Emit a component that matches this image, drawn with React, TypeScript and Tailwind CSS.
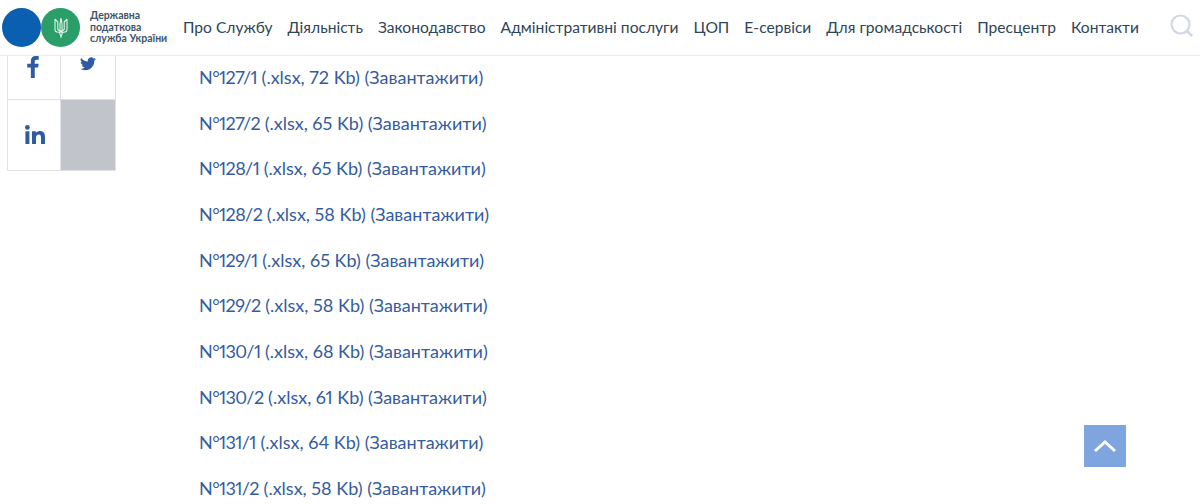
const nav = ["Про Службу", "Діяльність", "Законодавство", "Адміністративні послуги", "ЦОП", "Е-сервіси", "Для громадськості", "Пресцентр", "Контакти"];
const rows = [
  ["N°127/1", "(.xlsx, 72 Kb) (Завантажити)"],
  ["N°127/2", "(.xlsx, 65 Kb) (Завантажити)"],
  ["N°128/1", "(.xlsx, 65 Kb) (Завантажити)"],
  ["N°128/2", "(.xlsx, 58 Kb) (Завантажити)"],
  ["N°129/1", "(.xlsx, 65 Kb) (Завантажити)"],
  ["N°129/2", "(.xlsx, 58 Kb) (Завантажити)"],
  ["N°130/1", "(.xlsx, 68 Kb) (Завантажити)"],
  ["N°130/2", "(.xlsx, 61 Kb) (Завантажити)"],
  ["N°131/1", "(.xlsx, 64 Kb) (Завантажити)"],
  ["N°131/2", "(.xlsx, 58 Kb) (Завантажити)"],
];

export default function App() {
  return (
    <div className="relative h-[504px] w-[1200px] overflow-hidden bg-white font-['Lato',sans-serif]">
      <header className="flex h-[56px] items-center border-b border-[#ececec] pl-[2px]">
        <div className="h-[39px] w-[39px] shrink-0 rounded-full bg-[#0a5fb0]" />
        <div className="flex h-[39px] w-[39px] shrink-0 items-center justify-center rounded-full bg-[#2a9d68]">
          <svg width="14" height="21" viewBox="0 0 14 21" fill="none" stroke="#e3f3ea" strokeWidth="1.1">
            <path d="M7 1l-1 6v7h2V7zM1 2v10.500c0 1.800 1.600 2.700 3.500 2.700H7M13 2v10.500c0 1.800-1.600 2.700-3.500 2.700H7M1 2l2.800 3v7.500L7 15l3.200-2.500V5L13 2M5.500 15.500L7 20l1.500-4.500" />
          </svg>
        </div>
        <div className="ml-[10px] w-[84px] shrink-0 text-[10.5px] leading-[11.5px] font-bold text-[#3f5468]">
          <div>Державна</div>
          <div>податкова</div>
          <div className="whitespace-nowrap">служба України</div>
        </div>
        <nav className="ml-[9px] flex shrink-0 gap-[15px] whitespace-nowrap text-[15.6px] text-[#2f4558]">
          {nav.map((n) => (
            <span key={n}>{n}</span>
          ))}
        </nav>
        <svg className="ml-[31px] mb-[3px] shrink-0" width="24" height="24" viewBox="0 0 24 24" fill="none" stroke="#d0d8e4" strokeWidth="2.2">
          <circle cx="10.500" cy="10.500" r="9" />
          <path d="M17 17l5 5" strokeWidth="2.800" />
        </svg>
      </header>

      <div className="flex">
        <div className="ml-[7px] grid h-[115px] w-[109px] shrink-0 grid-cols-[53px_54px] grid-rows-[44px_70px] border-x border-b border-[#dfe1e5]">
          <div className="flex items-start justify-center border-r border-b border-[#dfe1e5]">
            <svg width="13" height="22" viewBox="0 0 12 21" fill="#2f5ba3" className="mr-[1px]">
              <path d="M3.500 21V11H0V7.300h3.500V4.600C3.500 1.600 5.300 0 8 0c1.300 0 2.500.1 3 .2v3.300H9c-1.500 0-1.800.7-1.800 1.700v2.100h3.700L10.400 11H7.200v10z" />
            </svg>
          </div>
          <div className="flex items-start justify-center border-b border-[#dfe1e5]">
            <svg width="16" height="14" viewBox="0 0 24 20" fill="#2f5ba3" className="mt-[1px]">
              <path d="M24 2.400a9.800 9.800 0 0 1-2.800.8A4.900 4.900 0 0 0 23.300.5a9.800 9.800 0 0 1-3.100 1.200 4.900 4.900 0 0 0-8.400 4.500A14 14 0 0 1 1.700.9a4.900 4.900 0 0 0 1.500 6.600 4.900 4.900 0 0 1-2.200-.6v.1a4.900 4.900 0 0 0 3.900 4.800 4.900 4.900 0 0 1-2.200.1 4.900 4.900 0 0 0 4.600 3.400A9.900 9.900 0 0 1 0 17.300 14 14 0 0 0 7.500 19.500c9.100 0 14-7.500 14-14v-.6A10 10 0 0 0 24 2.400z" />
            </svg>
          </div>
          <div className="flex items-center justify-center border-r border-[#dfe1e5]">
            <svg width="20" height="19" viewBox="0 0 20 19" fill="#2f5ba3" className="mb-[2px] ml-[2px]">
              <circle cx="2.400" cy="2.400" r="2.400" />
              <rect x="0.400" y="6.300" width="4" height="12.700" />
              <path d="M7 6.300h3.800V8c.6-1 2-2 4-2 4 0 5.200 2.500 5.200 6v7h-4v-6.300c0-1.700-.4-3.200-2.200-3.200-1.900 0-2.800 1.300-2.800 3.200V19H7z" />
            </svg>
          </div>
          <div className="bg-[#c1c4cb]" />
        </div>

        <ul className="ml-[83px] flex flex-col pt-[7px] text-[18px] leading-[28px] text-[#345c9f]">
          {rows.map(([a, b]) => (
            <li key={a} className="mb-[17.67px] whitespace-nowrap">
              <span className="tracking-[-0.6px] proportional-nums">{a}</span> <span className="proportional-nums">{b}</span>
            </li>
          ))}
        </ul>
      </div>

      <div className="absolute left-[1084px] top-[425px] flex h-[42px] w-[42px] items-center justify-center bg-[#7fa5df]">
        <svg width="24" height="14" viewBox="0 0 24 14" fill="none" stroke="#fff" strokeWidth="3">
          <path d="M2 12L12 3l10 9" />
        </svg>
      </div>
    </div>
  );
}
